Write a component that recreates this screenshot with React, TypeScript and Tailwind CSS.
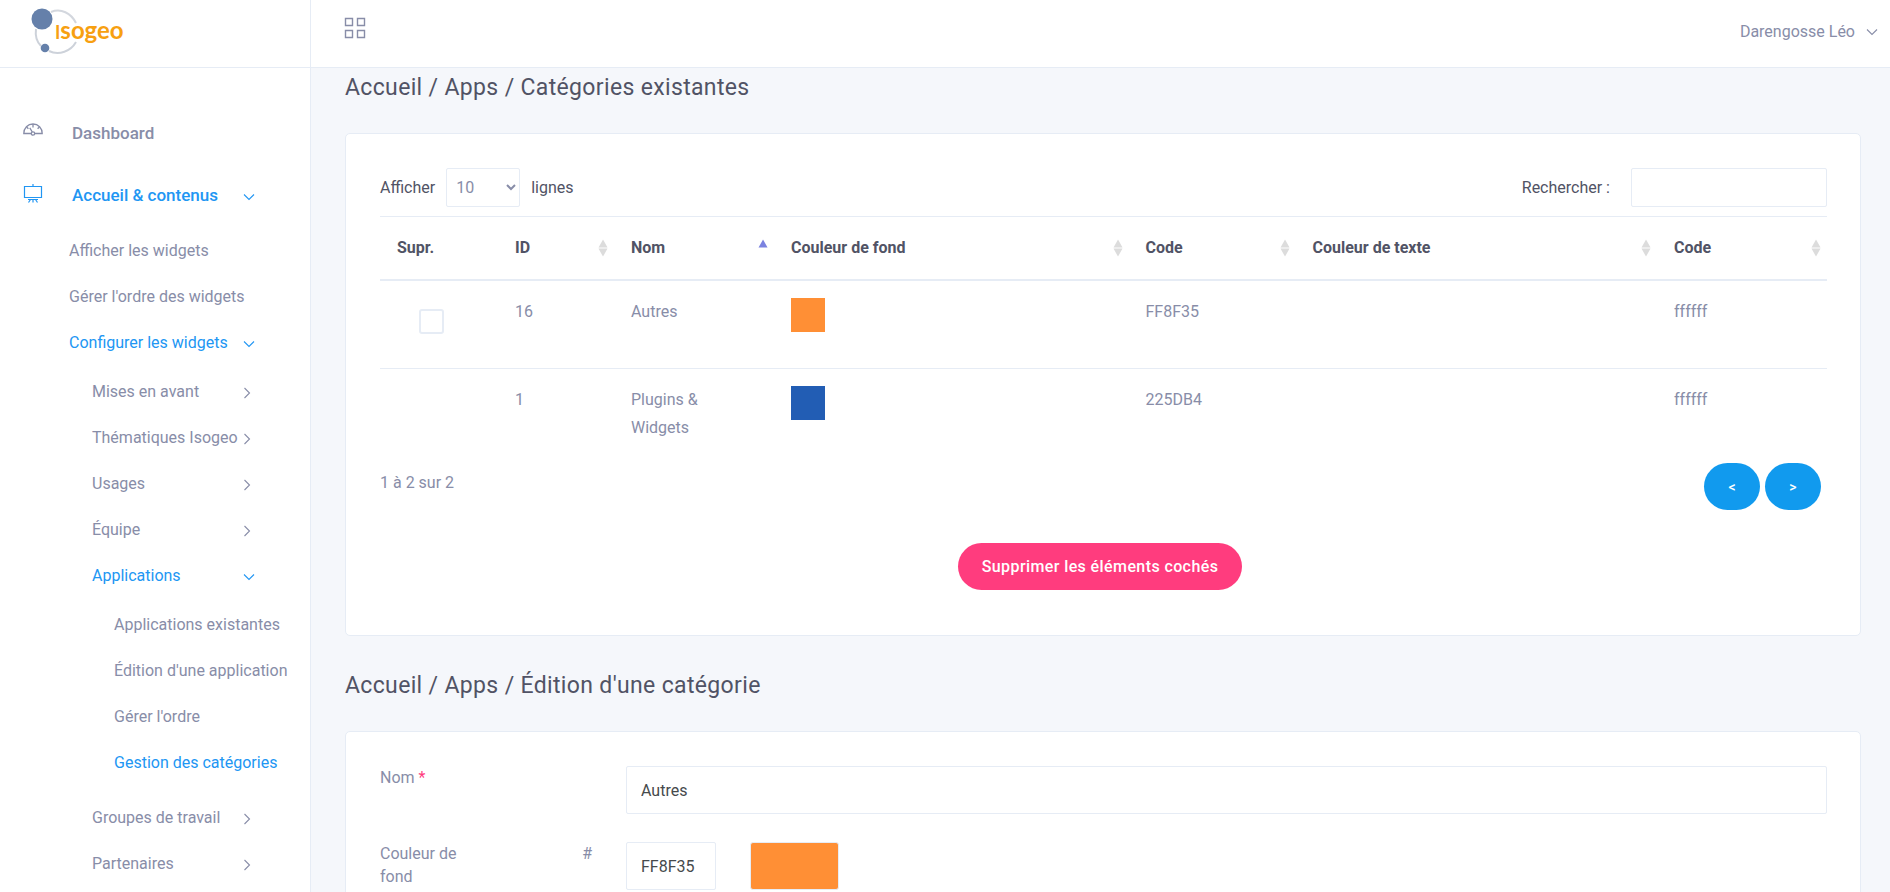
import type { ReactNode } from 'react';

type Level = 2 | 3 | 4;

function ChevronDown() {
  return (
    <svg width="12" height="8" viewBox="0 0 12 8" fill="none" stroke="currentColor" strokeWidth="1.1" aria-hidden="true">
      <path d="M1 1.5 6 6.5 11 1.5" />
    </svg>
  );
}

function ChevronRight() {
  return (
    <svg width="8" height="12" viewBox="0 0 8 12" fill="none" stroke="currentColor" strokeWidth="1.1" aria-hidden="true">
      <path d="M1.5 1 6.5 6 1.5 11" />
    </svg>
  );
}

function Logo() {
  return (
    <svg width="104" height="52" viewBox="0 0 104 52" role="img" aria-label="Isogeo">
      <path d="M26 8C36 4 46 9 51 19" fill="none" stroke="#d3d7de" strokeWidth="2" />
      <path d="M11 25C10 32 12 38 16 42M24 47C34 52 46 47 51 38" fill="none" stroke="#cdd2da" strokeWidth="2" />
      <circle cx="17" cy="15" r="10.5" fill="#6580aa" />
      <circle cx="20" cy="44" r="4.3" fill="#6580aa" />
      <text x="30" y="35" fill="#f7a011" fontFamily="Lato, sans-serif" fontWeight="700" fontSize="24">
        <tspan fontSize="18">I</tspan>sogeo
      </text>
    </svg>
  );
}

function GridIcon() {
  return (
    <svg width="22" height="22" viewBox="0 0 22 22" fill="none" stroke="currentColor" strokeWidth="1.4" aria-hidden="true">
      <path d="M1.500 1.500h7v7h-7zM13.500 1.500h7v7h-7zM1.500 13.500h7v7h-7zM13.500 13.500h7v7h-7z" />
    </svg>
  );
}

function GaugeIcon() {
  return (
    <svg width="20" height="14" viewBox="0 0 20 14" fill="none" stroke="currentColor" strokeWidth="1.3" aria-hidden="true">
      <path d="M8 10.5H.8C.8 5 4.700 1 10 1s9.200 4 9.200 9.500H12" />
      <circle cx="10" cy="10.500" r="1.700" />
      <path d="M9.300 9 6.800 4.800M10 1v3.500M3.600 4l1.800 1.800M16.400 4l-1.800 1.800" />
    </svg>
  );
}

function EaselIcon() {
  return (
    <svg width="20" height="20" viewBox="0 0 20 20" fill="none" stroke="currentColor" strokeWidth="1.2" aria-hidden="true">
      <path d="M1.500 3.500h17v11h-17zM10 1v2.500M5 16.500h10M7.500 16.500l-2 3M12.500 16.500l2 3M10 16.500v3" />
    </svg>
  );
}

function SortIcon({ active }: { active: boolean }) {
  return (
    <svg width="10" height="18" viewBox="0 0 10 18" className="shrink-0" aria-hidden="true">
      <path d="M5 .5 9.500 8.500H.5z" fill={active ? '#7b82e0' : '#dcdcdc'} />
      {!active && <path d="M5 17.500 9.500 9.500H.5z" fill="#dcdcdc" />}
    </svg>
  );
}

const indent: Record<Level, string> = { 2: 'pl-[69px]', 3: 'pl-[92px]', 4: 'pl-[114px]' };

function NavItem({ level, label, active, arrow, children }: {
  level: Level;
  label: string;
  active?: boolean;
  arrow?: 'down' | 'right';
  children?: ReactNode;
}) {
  return (
    <li>
      <a
        href="#"
        className={`flex h-[46px] items-center justify-between whitespace-nowrap ${arrow ? 'pr-[55px]' : ''} ${indent[level]} ${active ? 'text-[#2196f3]' : ''}`}
      >
        {label}
        {arrow && (
          <span className="flex w-3 pt-[2px]">{arrow === 'down' ? <ChevronDown /> : <ChevronRight />}</span>
        )}
      </a>
      {children && <ul className="pt-[3px]">{children}</ul>}
    </li>
  );
}

function Sidebar() {
  return (
    <aside className="w-[311px] shrink-0 border-r border-[#e6ecf5] bg-white">
      <div className="h-[68px] border-b border-[#e6ecf5] pl-[25px] pt-1">
        <a href="#" className="block w-[104px]"><Logo /></a>
      </div>
      <nav className="pt-9" aria-label="Navigation principale">
        <ul className="flex flex-col gap-0.5">
          <li>
            <a href="#" className="flex h-[60px] items-center pl-[23px] text-[17px] font-medium">
              <span className="flex h-[26px] w-[49px] pt-[2px]"><GaugeIcon /></span>
              Dashboard
            </a>
          </li>
          <li>
            <a href="#" className="flex h-[60px] items-center pl-[23px] pr-[55px] text-[17px] font-medium text-[#2196f3]">
              <span className="flex h-[26px] w-[49px]"><EaselIcon /></span>
              Accueil &amp; contenus
              <span className="ml-auto flex pt-[2px]"><ChevronDown /></span>
            </a>
            <ul className="pt-0.5">
              <NavItem level={2} label="Afficher les widgets" />
              <NavItem level={2} label="Gérer l'ordre des widgets" />
              <NavItem level={2} label="Configurer les widgets" active arrow="down">
                <NavItem level={3} label="Mises en avant" arrow="right" />
                <NavItem level={3} label="Thématiques Isogeo" arrow="right" />
                <NavItem level={3} label="Usages" arrow="right" />
                <NavItem level={3} label="Équipe" arrow="right" />
                <NavItem level={3} label="Applications" active arrow="down">
                  <NavItem level={4} label="Applications existantes" />
                  <NavItem level={4} label="Édition d'une application" />
                  <NavItem level={4} label="Gérer l'ordre" />
                  <li className="pb-[9px]">
                    <a href="#" aria-current="page" className="flex h-[46px] items-center pl-[114px] text-[#2196f3]">
                      Gestion des catégories
                    </a>
                  </li>
                </NavItem>
                <NavItem level={3} label="Groupes de travail" arrow="right" />
                <NavItem level={3} label="Partenaires" arrow="right" />
              </NavItem>
            </ul>
          </li>
        </ul>
      </nav>
    </aside>
  );
}

const columns = [
  { label: 'Supr.', width: 'w-[118px]', sort: 'none' },
  { label: 'ID', width: 'w-[116px]', sort: 'both' },
  { label: 'Nom', width: 'w-[160px]', sort: 'asc' },
  { label: 'Couleur de fond', width: 'w-[24.5%]', sort: 'both' },
  { label: 'Code', width: 'w-[167px]', sort: 'both' },
  { label: 'Couleur de texte', width: '', sort: 'both' },
  { label: 'Code', width: 'w-[170px]', sort: 'both' },
];

const rows = [
  { id: 16, name: 'Autres', swatch: 'bg-[#ff8f35]', code: 'FF8F35', text: 'ffffff', deletable: true },
  { id: 1, name: 'Plugins & Widgets', swatch: 'bg-[#225db4]', code: '225DB4', text: 'ffffff', deletable: false },
];

function CategoriesTable() {
  return (
    <table className="mt-[9px] w-full table-fixed border-t border-[#e6ecf5] text-left leading-7">
      <thead>
        <tr className="h-[63px] border-b-2 border-[#e6ecf5] text-[#515365]">
          {columns.map((c, i) => (
            <th key={i} scope="col" className={`pl-[17px] pr-[6px] font-bold ${c.width}`}>
              <span className="flex items-center justify-between">
                {c.label}
                {c.sort !== 'none' && <SortIcon active={c.sort === 'asc'} />}
              </span>
            </th>
          ))}
        </tr>
      </thead>
      <tbody>
        {rows.map((r, i) => (
          <tr key={r.id} className={`align-top ${i === 0 ? 'h-[89px]' : 'border-t border-[#e6ecf5]'}`}>
            <td className="pl-[39px] pt-7">
              {r.deletable && (
                <input
                  type="checkbox"
                  aria-label={`Supprimer ${r.name}`}
                  className="block size-[25px] appearance-none rounded-[3px] border-2 border-[#e6ecf5] bg-white"
                />
              )}
            </td>
            <td className="px-[17px] pt-[17px]">{r.id}</td>
            <td className="px-[17px] pb-[15px] pt-[17px]">{r.name}</td>
            <td className="px-[17px] pt-[17px]"><div className={`size-[34px] ${r.swatch}`} /></td>
            <td className="px-[17px] pt-[17px]">{r.code}</td>
            <td />
            <td className="px-[17px] pt-[17px]">{r.text}</td>
          </tr>
        ))}
      </tbody>
    </table>
  );
}

const card = 'rounded-[5px] border border-[#e6ecf5] bg-white pl-[34px] pr-[33px]';
const field = 'rounded-[2px] border border-[#e6ecf5] bg-white';
const heading = 'text-[23px] leading-7 tracking-[0.015em] text-[#515365]';
const pager = 'h-[47px] w-14 rounded-full bg-[#119aee] text-sm font-medium text-white';

export default function App() {
  return (
    <div className="flex h-screen overflow-hidden bg-[#f5f7fb] font-['Roboto',sans-serif] text-base text-[#888da8]">
      <Sidebar />
      <div className="min-w-0 flex-1">
        <header className="flex h-[68px] items-center justify-between border-b border-[#e6ecf5] bg-white pl-[33px] pr-3">
          <button type="button" aria-label="Menu" className="mb-3"><GridIcon /></button>
          <button type="button" className="mb-1 flex items-center gap-[11px]">
            Darengosse Léo <ChevronDown />
          </button>
        </header>
        <main className="pl-[34px] pr-[29px] pt-[6px]">
          <h1 className={heading}>Accueil / Apps / Catégories existantes</h1>
          <section className={`mt-[31px] pt-[34px] ${card}`}>
            <div className="flex items-center justify-between text-[#515365]">
              <label className="flex items-center gap-[11px]">
                Afficher
                <select defaultValue="10" className={`h-[39px] w-[74px] pl-[5px] pr-[6px] text-[#888da8] ${field}`}>
                  <option>10</option>
                  <option>25</option>
                  <option>50</option>
                </select>
                lignes
              </label>
              <label className="flex items-center gap-[21px]">
                Rechercher :
                <input type="search" className={`h-[39px] w-[196px] px-3 ${field}`} />
              </label>
            </div>
            <CategoriesTable />
            <div className="flex items-start justify-between pr-[6px] pt-[6px]">
              <p className="pt-2">1 à 2 sur 2</p>
              <div className="flex gap-[5px]">
                <button type="button" aria-label="Page précédente" className={pager}>&lt;</button>
                <button type="button" aria-label="Page suivante" className={pager}>&gt;</button>
              </div>
            </div>
            <div className="flex justify-center pb-[45px] pr-[7px] pt-[33px]">
              <button type="button" className="h-[47px] rounded-full bg-[#ff3c7e] px-6 font-medium tracking-wide text-white">
                Supprimer les éléments cochés
              </button>
            </div>
          </section>
          <h2 className={`mt-9 ${heading}`}>Accueil / Apps / Édition d'une catégorie</h2>
          <form className={`mt-[31px] flex flex-col gap-7 pb-8 pt-[34px] ${card}`}>
            <div className="flex items-start">
              <label htmlFor="name" className="w-[246px] shrink-0 leading-[23px]">
                Nom <span className="text-[#ff3c7e]">*</span>
              </label>
              <input id="name" defaultValue="Autres" className={`h-[48px] min-w-0 flex-1 px-[14px] text-[#464a4c] ${field}`} />
            </div>
            <div className="flex items-start">
              <label htmlFor="background" className="w-[100px] shrink-0 leading-[23px]">Couleur de fond</label>
              <span className="w-[146px] pr-[34px] text-right leading-[23px]">#</span>
              <input id="background" defaultValue="FF8F35" className={`h-[48px] w-[90px] px-[14px] text-[#464a4c] ${field}`} />
              <div className="ml-[34px] h-[48px] w-[89px] rounded-[3px] border border-[#e6ecf5] bg-[#ff8f35]" />
            </div>
          </form>
        </main>
      </div>
    </div>
  );
}
